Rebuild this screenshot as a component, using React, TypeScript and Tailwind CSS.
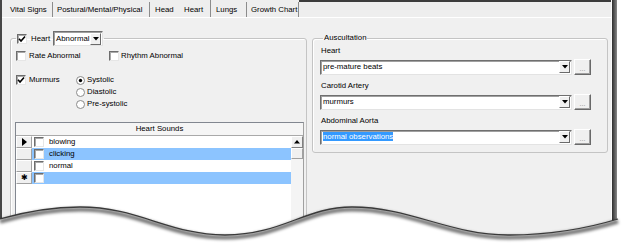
import React from 'react';

const CheckBox = ({ checked = false }: { checked?: boolean }) => (
  <div className="w-[10px] h-[10px] shrink-0 bg-white border border-t-[#6d6d6d] border-l-[#6d6d6d] border-b-[#e6e6e6] border-r-[#e6e6e6] shadow-[inset_1px_1px_0_#a9a9a9] flex items-center justify-center">
    {checked && (
      <svg width="8" height="8" viewBox="0 0 8 8">
        <polyline points="1,3.8 3,6 7,1.4" fill="none" stroke="#000" strokeWidth="1.6" />
      </svg>
    )}
  </div>
);

const Radio = ({ checked = false }: { checked?: boolean }) => (
  <svg width="9" height="9" viewBox="0 0 9 9" className="shrink-0">
    <circle cx="4.5" cy="4.5" r="4" fill="#fff" stroke="#8a8a8a" />
    {checked && <circle cx="4.5" cy="4.5" r="1.7" fill="#000" />}
  </svg>
);

const DropArrow = () => (
  <div className="w-[11px] h-[12px] shrink-0 bg-[#f0f0f0] border border-t-white border-l-white border-b-[#6a6a6a] border-r-[#6a6a6a] flex items-center justify-center">
    <svg width="6" height="4" viewBox="0 0 6 4">
      <polygon points="0,0 6,0 3,3.5" fill="#000" />
    </svg>
  </div>
);

const Combo = ({ value, width, selected = false }: { value: string; width: string; selected?: boolean }) => (
  <div className={`${width} h-[15px] bg-white border border-t-[#6f6f6f] border-l-[#6f6f6f] border-b-[#e3e3e3] border-r-[#e3e3e3] shadow-[inset_1px_1px_0_#a0a0a0] flex items-center pl-[2px] pr-[1px]`}>
    <span className="flex-1 whitespace-nowrap">
      {selected ? <span className="bg-[#3399ff] text-white">{value}</span> : value}
    </span>
    <DropArrow />
  </div>
);

const DotsButton = () => (
  <div className="w-[17px] h-[16px] bg-[#f0f0f0] border border-t-white border-l-white border-b-[#696969] border-r-[#696969] shadow-[inset_-1px_-1px_0_#a0a0a0] flex items-end justify-center pb-[2px] text-[#8a8a8a] text-[7px]">
    ...
  </div>
);

const Tab = ({ label, w, pl, sep = true, active = false }: { label: string; w: string; pl: string; sep?: boolean; active?: boolean }) => (
  <div
    className={`${w} ${pl} ${active ? 'h-[17px] pt-[2px]' : 'h-[15px]'} shrink-0 whitespace-nowrap flex items-center ${sep ? 'border-r border-[#8c8c8c]' : ''}`}
  >
    {label}
  </div>
);

const sounds = [
  { name: 'blowing', blue: false, marker: 'arrow' },
  { name: 'clicking', blue: true, marker: '' },
  { name: 'normal', blue: false, marker: '' },
  { name: '', blue: true, marker: 'new' },
];

export default function App() {
  const wave =
    'M0 219 C28 211 52 207 80 207 C138 207 170 235 225 235 C282 235 305 207 352 207 C410 207 450 235 508 235 C555 235 595 226 618 219';

  return (
    <div className="relative w-[624px] h-[243px] overflow-hidden bg-white font-['Liberation_Sans',Arial,sans-serif] text-[7.8px] leading-none text-black whitespace-nowrap">
      <div className="flex h-full w-[618px]">
        {/* window body */}
        <div className="flex flex-col w-[611px] h-full bg-[#f0f0f0] border-l-2 border-[#474747]">
          {/* tab strip */}
          <div className="flex items-end h-[17px] bg-[#eeeeee]">
            <Tab label="Vital Signs" w="w-[51px]" pl="pl-[8px]" />
            <Tab label="Postural/Mental/Physical" w="w-[97px]" pl="pl-[4px]" />
            <Tab label="Head" w="w-[30px]" pl="pl-[5px]" sep={false} />
            <Tab label="Heart" w="w-[31px]" pl="pl-[4px]" active />
            <Tab label="Lungs" w="w-[36px]" pl="pl-[5px]" />
            <Tab label="Growth Chart" w="w-[52px]" pl="pl-[4px]" />
            <div className="flex-1 self-stretch border-t-2 border-[#3c3c3c]" />
          </div>

          {/* tab page */}
          <div className="flex flex-1 border-t border-white">
            {/* Heart group */}
            <fieldset className="mt-[13px] ml-[8px] w-[297px] h-[300px] border border-[#c4c4c4] rounded-[3px] shadow-[inset_1px_1px_0_#fff]">
              <legend className="ml-[5px] px-[1px] h-[15px]">
                <div className="flex items-center h-[15px]">
                  <CheckBox checked />
                  <span className="ml-[4px] mr-[3px]">Heart</span>
                  <Combo value="Abnormal" width="w-[50px]" />
                </div>
              </legend>

              <div className="pl-[5px] pt-[4px]">
                <div className="flex items-center h-[12px]">
                  <CheckBox />
                  <span className="ml-[3px] w-[80px]">Rate Abnormal</span>
                  <CheckBox />
                  <span className="ml-[2px]">Rhythm Abnormal</span>
                </div>

                <div className="flex mt-[12px]">
                  <div className="flex items-center h-[12px] w-[60px]">
                    <CheckBox checked />
                    <span className="ml-[3px]">Murmurs</span>
                  </div>
                  <div className="flex flex-col">
                    {['Systolic', 'Diastolic', 'Pre-systolic'].map((r, i) => (
                      <div key={r} className="flex items-center h-[12px]">
                        <Radio checked={i === 0} />
                        <span className="ml-[2px]">{r}</span>
                      </div>
                    ))}
                  </div>
                </div>

                {/* Heart Sounds grid */}
                <div className="mt-[12px] -ml-[1px] w-[289px] h-[130px] border border-t-[#828790] border-l-[#828790] border-b-white border-r-[#a0a0a0] bg-white flex flex-col">
                  <div className="h-[13px] shrink-0 bg-[#f5f5f5] border-b border-[#a9a9a9] flex items-center justify-center">
                    Heart Sounds
                  </div>
                  <div className="flex flex-1">
                    <div className="flex-1 flex flex-col">
                      {sounds.map((s, i) => (
                        <div key={i} className="flex h-[12px]">
                          <div className="w-[16px] shrink-0 bg-[#f0f0f0] border border-t-white border-l-white border-b-[#a0a0a0] border-r-[#a0a0a0] flex items-center justify-center">
                            {s.marker === 'arrow' && (
                              <svg width="5" height="8" viewBox="0 0 5 8">
                                <polygon points="0,0 5,4 0,8" fill="#000" />
                              </svg>
                            )}
                            {s.marker === 'new' && <span className="text-[8px]">✱</span>}
                          </div>
                          <div className={`flex-1 flex items-center pl-[2px] ${s.blue ? 'bg-[#8cc4ff]' : 'bg-white'}`}>
                            <CheckBox />
                            <span className="ml-[5px]">{s.name}</span>
                          </div>
                        </div>
                      ))}
                    </div>
                    {/* scrollbar */}
                    <div className="w-[12px] shrink-0 bg-[#f4f4f4] flex flex-col">
                      <div className="h-[12px] bg-[#f0f0f0] border border-t-white border-l-white border-b-[#808080] border-r-[#808080] flex items-center justify-center">
                        <svg width="6" height="4" viewBox="0 0 6 4">
                          <polygon points="3,0 6,3.5 0,3.5" fill="#000" />
                        </svg>
                      </div>
                      <div className="h-[11px] bg-[#f0f0f0] border border-t-white border-l-white border-b-[#a0a0a0] border-r-[#a0a0a0]" />
                    </div>
                  </div>
                </div>
              </div>
            </fieldset>

            {/* Auscultation group */}
            <fieldset className="mt-[15px] ml-[5px] w-[296px] self-start border border-[#c4c4c4] rounded-[3px] shadow-[inset_1px_1px_0_#fff] pl-[7px] pb-[7px]">
              <legend className="ml-[3px] px-[1px] h-[10px] leading-[10px]">Auscultation</legend>
              <div className="pt-[2px]">
                {[
                  { label: 'Heart', value: 'pre-mature beats' },
                  { label: 'Carotid Artery', value: 'murmurs' },
                  { label: 'Abdominal Aorta', value: 'normal observations', selected: true },
                ].map((f, i) => (
                  <div key={f.label} className={i > 0 ? 'mt-[5px]' : ''}>
                    <div className="h-[12px] flex items-center pl-[1px]">{f.label}</div>
                    <div className="flex items-center mt-[2px] gap-[2px]">
                      <Combo value={f.value} width="w-[252px]" selected={f.selected} />
                      <DotsButton />
                    </div>
                  </div>
                ))}
              </div>
            </fieldset>
          </div>
        </div>
        {/* right window edge shadow */}
        <div className="w-[6px] h-full border-l border-[#fafafa] bg-gradient-to-r from-[#2e2e2e] to-[#8a8a8a]" />
      </div>

      {/* torn bottom edge */}
      <svg className="absolute inset-0 pointer-events-none" width="624" height="243" viewBox="0 0 624 243">
        <defs>
          <filter id="blur" x="-5%" y="-50%" width="110%" height="200%">
            <feGaussianBlur stdDeviation="1.8" />
          </filter>
        </defs>
        <path d={`${wave} L624 219 L624 243 L0 243 Z`} fill="#fff" />
        <path d={wave} fill="none" stroke="#000" strokeOpacity="0.55" strokeWidth="4" transform="translate(0 2.5)" filter="url(#blur)" />
        <path d={wave} fill="none" stroke="#3a3a3a" strokeWidth="1.3" />
      </svg>
    </div>
  );
}
